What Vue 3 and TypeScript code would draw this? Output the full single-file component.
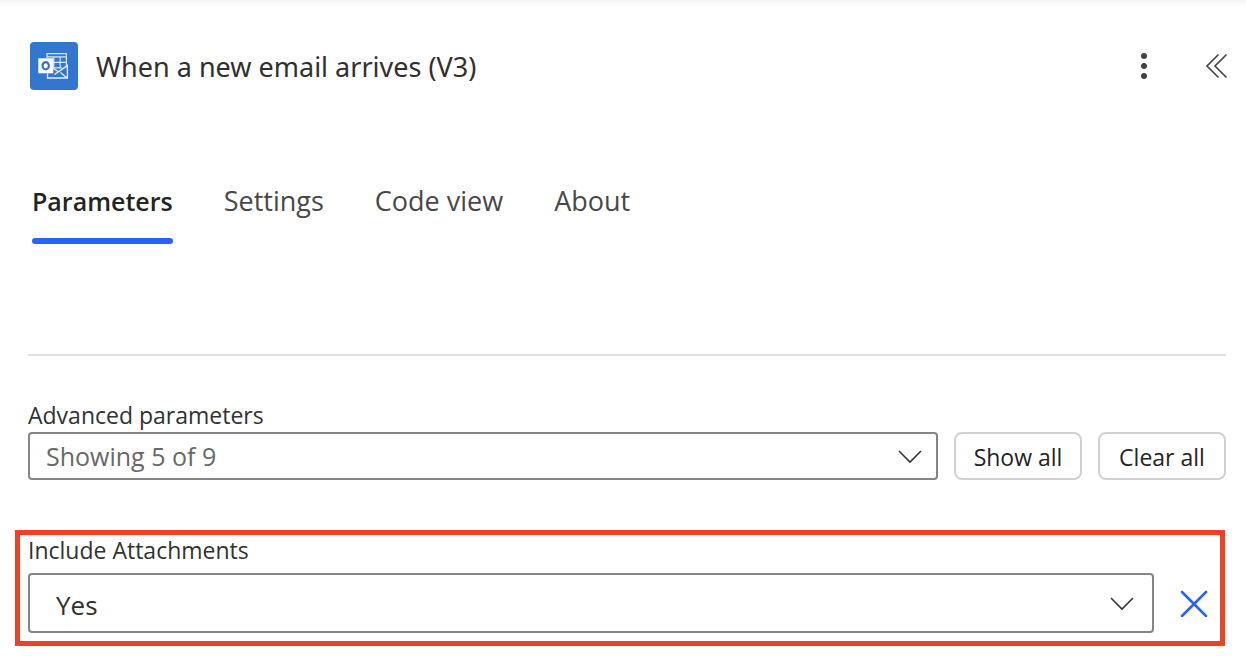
<script setup lang="ts">
import { ref } from 'vue'

const tabs: string[] = ['Parameters', 'Settings', 'Code view', 'About']
const activeTab = ref<string>('Parameters')
const shown = ref<string>('Showing 5 of 9')
const includeAttachments = ref<string>('Yes')
</script>

<template>
  <main class="panel">
    <header class="header">
      <svg class="logo" viewBox="0 0 48 48" aria-hidden="true">
        <rect width="48" height="48" rx="4" fill="#3276d0" />
        <g fill="none" stroke="#d6e6fa" stroke-width="1.2">
          <path d="M17 16V11.600H36.400V24" />
          <path d="M17 14.800H36.400M23 20.400H36.400M23 25.800H32M23.800 14.800V27M30.200 14.800V26.500" />
        </g>
        <path d="M17.500 31.500V36H37.400V23.600L24.500 32.500M24 27L28.500 29.700M30.500 30.500L37 36" fill="none" stroke="#e8f1fc" stroke-width="1.300" />
        <rect x="8.300" y="16.300" width="15" height="15" fill="#fff" />
        <ellipse cx="15.700" cy="23.800" rx="3.200" ry="3.600" fill="none" stroke="#3276d0" stroke-width="2.200" />
      </svg>
      <h1 class="title">When a new email arrives (V3)</h1>
      <button class="icon-button" type="button" aria-label="More commands">
        <svg width="24" height="32" viewBox="0 0 24 32" fill="#424242">
          <circle cx="12" cy="6" r="3" /><circle cx="12" cy="16" r="3" /><circle cx="12" cy="26" r="3" />
        </svg>
      </button>
      <button class="icon-button collapse" type="button" aria-label="Collapse">
        <svg width="24" height="32" viewBox="0 0 24 32" fill="none" stroke="#424242" stroke-width="1.600">
          <path d="M14.500 4.500L3 16L14.500 27.500M22.500 4.500L11 16L22.500 27.500" />
        </svg>
      </button>
    </header>

    <nav class="tabs" role="tablist">
      <button
        v-for="tab in tabs"
        :key="tab"
        class="tab"
        :class="{ active: tab === activeTab }"
        type="button"
        role="tab"
        :aria-selected="tab === activeTab"
        @click="activeTab = tab"
      >{{ tab }}</button>
    </nav>

    <section class="advanced">
      <label class="label" for="advanced">Advanced parameters</label>
      <div class="row">
        <div class="select-wrap">
          <select id="advanced" v-model="shown" class="select small">
            <option>Showing 5 of 9</option>
          </select>
          <svg class="chevron" width="24" height="14" viewBox="0 0 24 14"><path d="M1 1L12 12L23 1" /></svg>
        </div>
        <button class="action" type="button">Show all</button>
        <button class="action" type="button">Clear all</button>
      </div>
    </section>

    <section class="attachments">
      <label class="label" for="attachments">Include Attachments</label>
      <div class="row">
        <div class="select-wrap">
          <select id="attachments" v-model="includeAttachments" class="select large">
            <option>Yes</option>
            <option>No</option>
          </select>
          <svg class="chevron" width="24" height="14" viewBox="0 0 24 14"><path d="M1 1L12 12L23 1" /></svg>
        </div>
        <button class="icon-button" type="button" aria-label="Remove parameter">
          <svg width="28" height="28" viewBox="0 0 28 28" fill="none" stroke="#2764f5" stroke-width="2.600" stroke-linecap="round">
            <path d="M2 3L26 27M26 3L2 27" />
          </svg>
        </button>
      </div>
    </section>
  </main>
</template>

<style>
body {
  margin: 0;
  background: #fff;
}
</style>

<style scoped>
* {
  box-sizing: border-box;
}
.panel {
  font-family: "Open Sans", "Noto Sans", sans-serif;
  color: #242424;
  padding-top: 42px;
  background: linear-gradient(#f5f5f5, #fff 6px);
}
button,
select {
  font-family: inherit;
  margin: 0;
}
.header {
  display: flex;
  align-items: center;
  height: 48px;
  padding: 0 18px 0 30px;
}
.logo {
  width: 48px;
  height: 48px;
  flex: none;
}
.title {
  flex: 1;
  margin: 0 0 0 18px;
  padding-top: 2px;
  font-family: "Noto Sans", sans-serif;
  font-size: 27px;
  line-height: 36px;
  font-weight: 400;
  color: #322f2e;
}
.icon-button {
  display: flex;
  padding: 0;
  border: 0;
  background: none;
}
.collapse {
  margin-left: 48px;
}
.tabs {
  display: flex;
  gap: 51px;
  margin: 92px 32px 0;
}
.tab {
  position: relative;
  height: 62px;
  padding: 0 0 24px;
  border: 0;
  background: none;
  color: #484848;
  font-size: 27px;
  line-height: 38px;
  white-space: nowrap;
}
.tab.active {
  color: #242424;
  font-size: 25px;
  font-weight: 600;
}
.tab.active::after {
  content: "";
  position: absolute;
  left: 0;
  right: 0;
  bottom: 0;
  height: 6px;
  border-radius: 3px;
  background: #2764f5;
}
.advanced {
  margin: 110px 20px 0 28px;
  padding-top: 44px;
  border-top: 2px solid #e0e0e0;
}
.label {
  display: block;
  padding-bottom: 2px;
  font-size: 23px;
  line-height: 30px;
  color: #323232;
}
.row {
  display: flex;
  align-items: center;
  gap: 16px;
}
.select-wrap {
  position: relative;
  flex: 1;
}
.select {
  display: block;
  width: 100%;
  appearance: none;
  border: 2px solid #858585;
  border-radius: 4px;
  background: #fff;
}
.select.small {
  height: 48px;
  padding: 0 56px 0 16px;
  font-size: 25px;
  color: #686868;
}
.select.large {
  height: 60px;
  padding: 4px 56px 0 26px;
  font-size: 26px;
  color: #322f2e;
}
.chevron {
  position: absolute;
  right: 16px;
  top: 50%;
  margin-top: -6px;
  fill: none;
  stroke: #363636;
  stroke-width: 1.6;
  pointer-events: none;
}
.action {
  width: 128px;
  height: 48px;
  padding: 2px 0 0;
  border: 2px solid #d1d1d1;
  border-radius: 8px;
  background: #fff;
  color: #242424;
  font-size: 23px;
  white-space: nowrap;
}
.attachments {
  margin: 50px 21px 0 15px;
  padding: 0 12px 8px 8px;
  border: 5px solid #ec4326;
}
.attachments .label {
  margin-bottom: 6px;
}
.attachments .row {
  gap: 26px;
}
.attachments .chevron {
  right: 20px;
}
</style>
